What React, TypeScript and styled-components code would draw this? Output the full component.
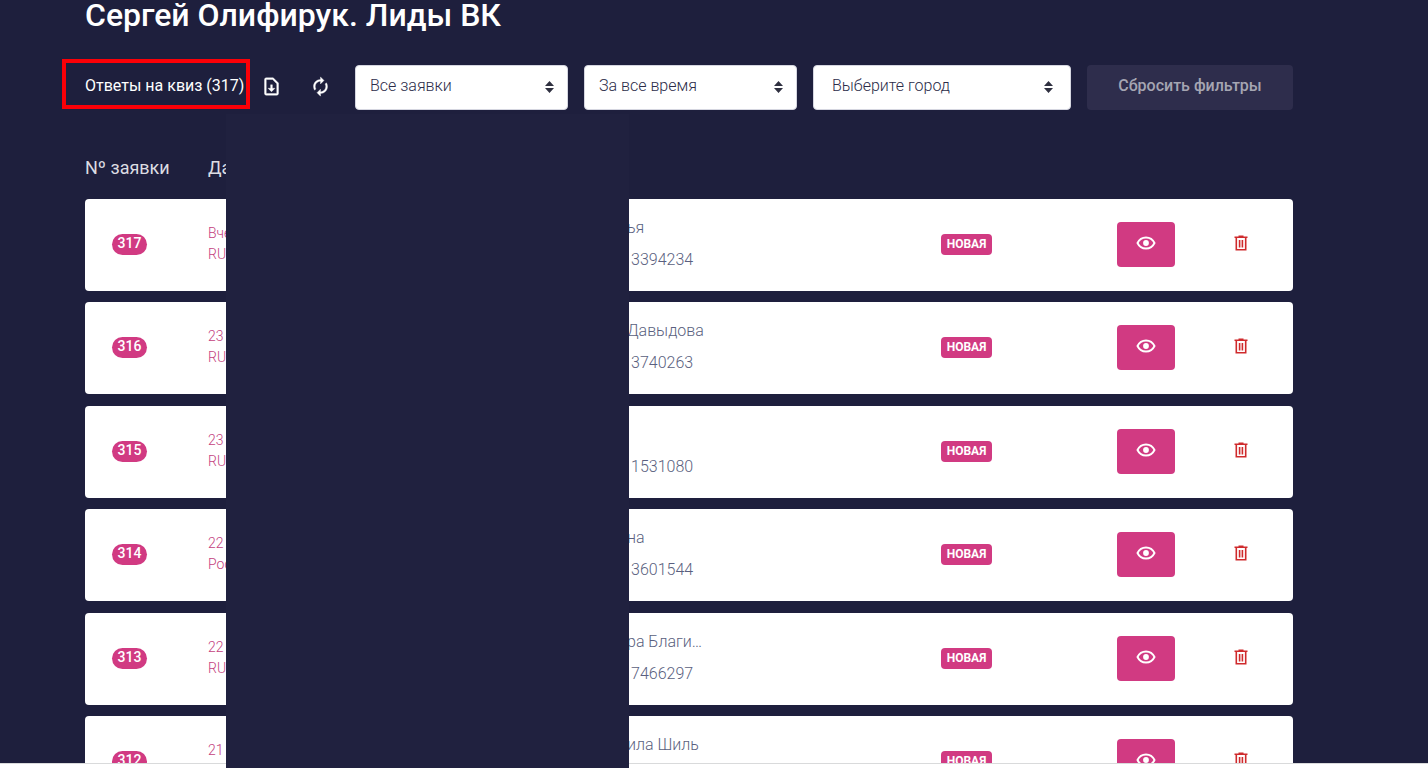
import React from "react";
import styled, { createGlobalStyle } from "styled-components";

const GlobalStyle = createGlobalStyle`
  *, *::before, *::after { box-sizing: border-box; }
  html, body, #root { height: 100%; }
  body {
    margin: 0;
    background: #1e1f3d;
    font-family: Roboto, "Liberation Sans", sans-serif;
    font-size: 16px;
    line-height: 24px;
    color: #fff;
  }
  button, select { font: inherit; }
`;

const Page = styled.div`
  position: relative;
  display: flex;
  flex-direction: column;
  height: 100vh;
  overflow: hidden;
`;

const Content = styled.main`
  flex: 1;
  min-height: 0;
  overflow: hidden;
  padding: 0 135px 0 85px;
`;

const Title = styled.h1`
  margin: -5px 0 30px;
  font-size: 32px;
  line-height: 40px;
  font-weight: 500;
`;

const Toolbar = styled.div`
  display: flex;
  gap: 16px;
  height: 45px;
`;

const Summary = styled.div`
  display: flex;
  align-items: center;
  width: 254px;
`;

const CountFrame = styled.div`
  flex: none;
  display: flex;
  align-items: center;
  width: 188px;
  height: 50px;
  margin: -8px -3px 0 -23px;
  padding: 4px 0 0 19px;
  border: 4px solid #fb0007;
  white-space: nowrap;
`;

const IconButton = styled.button`
  flex: none;
  display: flex;
  align-items: center;
  justify-content: center;
  width: 49px;
  height: 45px;
  padding: 0 0 2px;
  border: 0;
  background: none;
  color: #fff;
`;

const SelectBox = styled.label<{ $grow: number }>`
  position: relative;
  flex: ${(p) => p.$grow} 1 0;
  display: flex;
`;

const Select = styled.select<{ $indent: number }>`
  appearance: none;
  width: 100%;
  padding: 0 40px 3px ${(p) => p.$indent}px;
  border: 1px solid #d5d6e0;
  border-radius: 4px;
  background: #fff;
  color: #2b2c49;
  font-weight: 300;
`;

const Arrows = styled.svg<{ $indent: number }>`
  position: absolute;
  right: ${(p) => p.$indent}px;
  top: 16px;
  pointer-events: none;
`;

const ResetButton = styled.button`
  flex: 206 1 0;
  padding: 0 0 4px;
  border: 0;
  border-radius: 4px;
  background: #2e2d4c;
  color: #a5a5b2;
  font-weight: 500;
`;

const Table = styled.table`
  display: block;
  margin-top: 44px;
`;

const HeadGroup = styled.thead`
  display: block;
`;

const BodyGroup = styled.tbody`
  display: block;
`;

const rowColumns = "123px 419px minmax(0, 1fr) 176px 112px 64px";

const HeadRow = styled.tr`
  display: grid;
  grid-template-columns: ${rowColumns};
  height: 45px;
`;

const HeadCell = styled.th`
  padding: 0;
  text-align: left;
  font-size: 18px;
  line-height: 28px;
  font-weight: 400;
  color: #dcdce2;
`;

const Row = styled.tr`
  display: grid;
  grid-template-columns: ${rowColumns};
  align-items: center;
  height: 92px;
  margin-bottom: 11px;
  padding-bottom: 2px;
  border-radius: 4px;
  background: #fff;
  &:nth-child(even) { margin-bottom: 12px; }
`;

const Cell = styled.td`
  padding: 0;
  white-space: nowrap;
`;

const NumberCell = styled(Cell)`
  padding-left: 27px;
`;

const NumberBadge = styled.span`
  display: block;
  width: 35px;
  height: 21px;
  border-radius: 11px;
  background: #d13a82;
  text-align: center;
  font-size: 14px;
  line-height: 19px;
  font-weight: 500;
`;

const DateCell = styled(Cell)`
  align-self: start;
  padding-top: 24px;
  font-size: 14px;
  line-height: 21px;
  font-weight: 300;
  color: #c43f80;
`;

const ContactCell = styled(Cell)`
  align-self: start;
  padding-top: 13px;
  line-height: 32px;
  font-weight: 300;
  color: #5a5f80;
`;

const Name = styled.div`
  height: 32px;
`;

const Phone = styled.div`
  padding-left: 4px;
`;

const StatusBadge = styled.span`
  display: block;
  width: 51px;
  height: 21px;
  border-radius: 4px;
  background: #d13a82;
  text-align: center;
  font-size: 12px;
  line-height: 20px;
  font-weight: 700;
`;

const ViewButton = styled.button`
  display: flex;
  align-items: center;
  justify-content: center;
  width: 58px;
  height: 45px;
  padding: 0 0 2px;
  border: 0;
  border-radius: 4px;
  background: #d13a82;
  color: #fff;
`;

const DeleteButton = styled(IconButton)`
  width: 24px;
  height: 24px;
`;

const Panel = styled.div`
  position: absolute;
  z-index: 1;
  left: 226px;
  top: 114px;
  bottom: 0;
  width: 403px;
  background: #20213f;
`;

const StatusLine = styled.footer`
  flex: none;
  height: 5px;
  border-top: 1px solid #d9dadb;
  background: #fff;
`;

function DownloadIcon() {
  return (
    <svg width="21" height="21" viewBox="0 0 24 24" fill="currentColor" stroke="currentColor" strokeWidth="0.400" aria-hidden="true">
      <path d="M14 2H6c-1.100 0-2 .9-2 2v16c0 1.100.9 2 2 2h12c1.100 0 2-.9 2-2V8l-6-6zm4 18H6V4h7.200L18 8.800V20zM13 10h-2v4H8l4 4 4-4h-3z" />
    </svg>
  );
}

function RefreshIcon() {
  return (
    <svg width="21" height="21" viewBox="0 0 24 24" fill="currentColor" stroke="currentColor" strokeWidth="0.400" aria-hidden="true">
      <path d="M12 6v3l4-4-4-4v3c-4.420 0-8 3.580-8 8 0 1.570.46 3.030 1.240 4.260L6.700 14.800A5.870 5.870 0 0 1 6 12c0-3.310 2.690-6 6-6zm6.760 1.740L17.300 9.200c.44.84.7 1.790.7 2.800 0 3.310-2.690 6-6 6v-3l-4 4 4 4v-3c4.420 0 8-3.580 8-8 0-1.570-.46-3.030-1.240-4.260z" />
    </svg>
  );
}

function EyeIcon() {
  return (
    <svg width="20" height="14" viewBox="0 0 20 14" aria-hidden="true">
      <path d="M1.500 7C3.300 3.200 6.400 1.500 10 1.500s6.700 1.700 8.500 5.500c-1.800 3.800-4.900 5.500-8.500 5.500S3.300 10.800 1.500 7z" fill="none" stroke="currentColor" strokeWidth="1.900" />
      <circle cx="10" cy="7" r="2.900" fill="currentColor" />
    </svg>
  );
}

function TrashIcon() {
  return (
    <svg width="14" height="16" viewBox="0 0 14 16" fill="none" stroke="#cf2a2c" strokeWidth="1.600" aria-hidden="true">
      <path d="M.5 2.300h13M4.500 1.300h5M2.300 2.500v12.200h9.400V2.500M5.600 5v7.500M8.400 5v7.500" />
    </svg>
  );
}

function FilterSelect(props: { label: string; grow: number; indent: number }) {
  return (
    <SelectBox $grow={props.grow}>
      <Select $indent={props.indent} aria-label={props.label}>
        <option>{props.label}</option>
      </Select>
      <Arrows $indent={props.indent} width="9" height="12" viewBox="0 0 9 12" fill="#2f3040" aria-hidden="true">
        <path d="M4.500 0 9 5H0zM4.500 12 0 7h9z" />
      </Arrows>
    </SelectBox>
  );
}

const leads = [
  { id: 317, date: "Вче", place: "RU,", name: "ья", phone: "3394234" },
  { id: 316, date: "23", place: "RU,", name: "Давыдова", phone: "3740263" },
  { id: 315, date: "23", place: "RU,", name: "", phone: "1531080" },
  { id: 314, date: "22", place: "Рос", name: "на", phone: "3601544" },
  { id: 313, date: "22", place: "RU,", name: "ра Благи…", phone: "7466297" },
  { id: 312, date: "21", place: "", name: "ила Шиль", phone: "" },
];

export default function App() {
  return (
    <Page>
      <GlobalStyle />
      <Content>
        <Title>Сергей Олифирук. Лиды ВК</Title>
        <Toolbar>
          <Summary>
            <CountFrame>Ответы на квиз (317)</CountFrame>
            <IconButton aria-label="Скачать"><DownloadIcon /></IconButton>
            <IconButton aria-label="Обновить"><RefreshIcon /></IconButton>
          </Summary>
          <FilterSelect label="Все заявки" grow={213} indent={14} />
          <FilterSelect label="За все время" grow={213} indent={14} />
          <FilterSelect label="Выберите город" grow={258} indent={18} />
          <ResetButton>Сбросить фильтры</ResetButton>
        </Toolbar>
        <Table>
          <HeadGroup>
            <HeadRow>
              <HeadCell>Nº заявки</HeadCell>
              <HeadCell>Да</HeadCell>
            </HeadRow>
          </HeadGroup>
          <BodyGroup>
            {leads.map((lead) => (
              <Row key={lead.id}>
                <NumberCell><NumberBadge>{lead.id}</NumberBadge></NumberCell>
                <DateCell>
                  <div>{lead.date}</div>
                  <div>{lead.place}</div>
                </DateCell>
                <ContactCell>
                  <Name>{lead.name}</Name>
                  <Phone>{lead.phone}</Phone>
                </ContactCell>
                <Cell><StatusBadge>НОВАЯ</StatusBadge></Cell>
                <Cell><ViewButton aria-label="Открыть"><EyeIcon /></ViewButton></Cell>
                <Cell><DeleteButton aria-label="Удалить"><TrashIcon /></DeleteButton></Cell>
              </Row>
            ))}
          </BodyGroup>
        </Table>
      </Content>
      <StatusLine />
      <Panel />
    </Page>
  );
}
